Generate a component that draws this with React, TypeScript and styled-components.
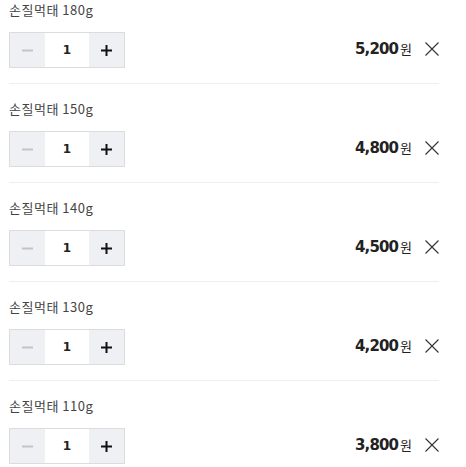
import React from "react";
import styled, { createGlobalStyle } from "styled-components";

const Global = createGlobalStyle`
  html, body { margin: 0; padding: 0; background: #fff; }
  body { font-family: "Noto Sans CJK KR", "Noto Sans", sans-serif; color: #333; }
`;

const List = styled.ul`
  list-style: none;
  margin: 0;
  padding: 0 0 0 9px;
  width: 430px;
`;

const Item = styled.li`
  padding: 15px 0;
  border-bottom: 1px solid #eeeeee;
  &:first-child { padding-top: 0; }
`;

const Title = styled.div`
  font-size: 13px;
  line-height: 20px;
  color: #444;
  letter-spacing: 0.5px;
`;

const Row = styled.div`
  margin-top: 12px;
  display: flex;
  align-items: center;
  justify-content: space-between;
`;

const Stepper = styled.div`
  display: flex;
  height: 34px;
  border: 1px solid #dcdcdc;
  width: 114px;
`;

const StepBtn = styled.button<{ $disabled?: boolean }>`
  width: 35px;
  height: 34px;
  border: 0;
  margin: 0;
  padding: 0;
  background: #eff0f3;
  display: flex;
  align-items: center;
  justify-content: center;
  cursor: pointer;
  color: ${(p) => (p.$disabled ? "#c2c3c6" : "#111")};
`;

const Count = styled.div`
  width: 44px;
  display: flex;
  align-items: center;
  justify-content: center;
  font-family: "DejaVu Sans", sans-serif;
  font-size: 12px;
  font-weight: 700;
  color: #222;
  background: #fff;
`;

const Right = styled.div`
  display: flex;
  align-items: center;
  padding-bottom: 3px;
`;

const Price = styled.div`
  display: flex;
  align-items: baseline;
  color: #222;
`;

const Amount = styled.span`
  font-family: "DejaVu Sans", sans-serif;
  font-weight: 700;
  font-size: 15px;
  letter-spacing: -0.9px;
`;

const Won = styled.span`
  font-size: 13px;
  margin-left: 2px;
`;

const Remove = styled.button`
  margin-left: 12px;
  width: 15px;
  height: 15px;
  padding: 0;
  border: 0;
  background: none;
  display: flex;
  align-items: center;
  justify-content: center;
  cursor: pointer;
`;

const Minus = () => (
  <svg width="11" height="11" viewBox="0 0 11 11">
    <rect x="0" y="4.5" width="11" height="2" fill="currentColor" />
  </svg>
);

const Plus = () => (
  <svg width="11" height="11" viewBox="0 0 11 11">
    <rect x="0" y="4.5" width="11" height="2" fill="currentColor" />
    <rect x="4.5" y="0" width="2" height="11" fill="currentColor" />
  </svg>
);

const Close = () => (
  <svg width="14" height="14" viewBox="0 0 14 14">
    <path d="M0.5 0.5 L13.5 13.5 M13.5 0.5 L0.5 13.5" stroke="#333" strokeWidth="1.1" fill="none" />
  </svg>
);

const items = [
  { name: "손질먹태 180g", price: "5,200" },
  { name: "손질먹태 150g", price: "4,800" },
  { name: "손질먹태 140g", price: "4,500" },
  { name: "손질먹태 130g", price: "4,200" },
  { name: "손질먹태 110g", price: "3,800" },
];

export default function App() {
  return (
    <>
      <Global />
      <List>
        {items.map((it) => (
          <Item key={it.name}>
            <Title>{it.name}</Title>
            <Row>
              <Stepper>
                <StepBtn $disabled aria-label="감소">
                  <Minus />
                </StepBtn>
                <Count>1</Count>
                <StepBtn aria-label="증가">
                  <Plus />
                </StepBtn>
              </Stepper>
              <Right>
                <Price>
                  <Amount>{it.price}</Amount>
                  <Won>원</Won>
                </Price>
                <Remove aria-label="삭제">
                  <Close />
                </Remove>
              </Right>
            </Row>
          </Item>
        ))}
      </List>
    </>
  );
}
